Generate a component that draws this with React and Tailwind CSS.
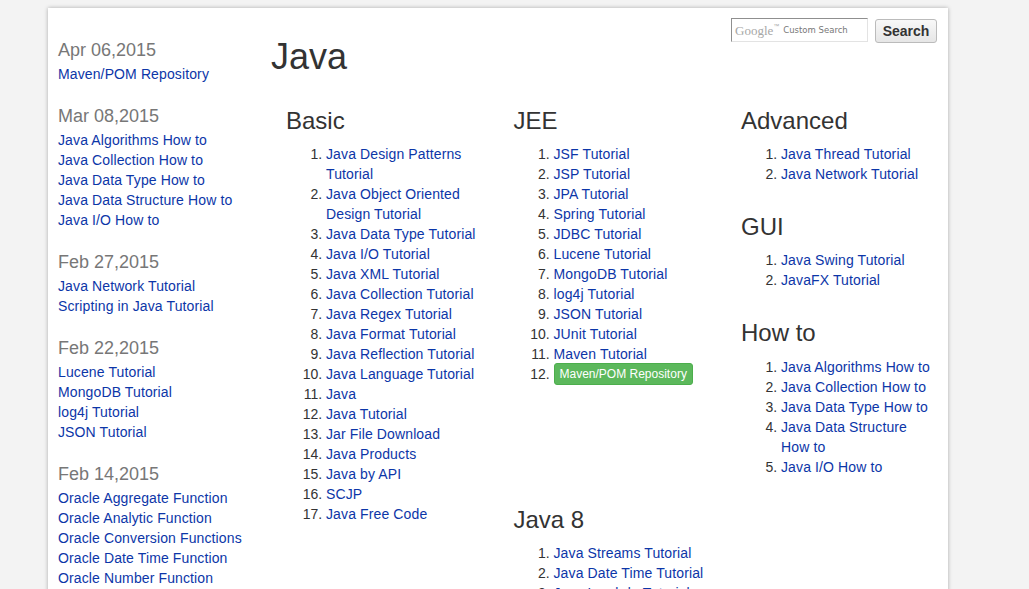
import React from "react";

const recent = [
  { date: "Apr 06,2015", links: ["Maven/POM Repository"] },
  {
    date: "Mar 08,2015",
    links: [
      "Java Algorithms How to",
      "Java Collection How to",
      "Java Data Type How to",
      "Java Data Structure How to",
      "Java I/O How to",
    ],
  },
  { date: "Feb 27,2015", links: ["Java Network Tutorial", "Scripting in Java Tutorial"] },
  { date: "Feb 22,2015", links: ["Lucene Tutorial", "MongoDB Tutorial", "log4j Tutorial", "JSON Tutorial"] },
  {
    date: "Feb 14,2015",
    links: [
      "Oracle Aggregate Function",
      "Oracle Analytic Function",
      "Oracle Conversion Functions",
      "Oracle Date Time Function",
      "Oracle Number Function",
      "Oracle String Function",
    ],
  },
];

const basic = [
  "Java Design Patterns Tutorial",
  "Java Object Oriented Design Tutorial",
  "Java Data Type Tutorial",
  "Java I/O Tutorial",
  "Java XML Tutorial",
  "Java Collection Tutorial",
  "Java Regex Tutorial",
  "Java Format Tutorial",
  "Java Reflection Tutorial",
  "Java Language Tutorial",
  "Java",
  "Java Tutorial",
  "Jar File Download",
  "Java Products",
  "Java by API",
  "SCJP",
  "Java Free Code",
];

const jee = [
  "JSF Tutorial",
  "JSP Tutorial",
  "JPA Tutorial",
  "Spring Tutorial",
  "JDBC Tutorial",
  "Lucene Tutorial",
  "MongoDB Tutorial",
  "log4j Tutorial",
  "JSON Tutorial",
  "JUnit Tutorial",
  "Maven Tutorial",
];

const java8 = ["Java Streams Tutorial", "Java Date Time Tutorial", "Java Lambda Tutorial"];
const advanced = ["Java Thread Tutorial", "Java Network Tutorial"];
const gui = ["Java Swing Tutorial", "JavaFX Tutorial"];
const howto = [
  "Java Algorithms How to",
  "Java Collection How to",
  "Java Data Type How to",
  "Java Data Structure How to",
  "Java I/O How to",
];

function Heading({ children, className = "" }) {
  return (
    <h3 className={"text-[24px] leading-[26.4px] text-[#333] mb-[10px] " + className}>{children}</h3>
  );
}

function List({ items, children }) {
  return (
    <ol className="list-decimal pl-10 text-[14px] leading-5 text-[#333]">
      {items.map((t) => (
        <li key={t}>
          <a href="#" className="text-[#0c36a8] tracking-[0.12px]">
            {t}
          </a>
        </li>
      ))}
      {children}
    </ol>
  );
}

export default function App() {
  return (
    <div className="min-h-screen bg-[#f3f3f3] pt-2 font-['Liberation_Sans',Arial,sans-serif] text-[14px] text-[#333]">
      <div className="ml-[48px] w-[900px] min-h-[700px] bg-white shadow-[0_0_4px_rgba(0,0,0,0.3)] flex">
        {/* sidebar */}
        <aside className="w-[223px] pl-[10px] pt-[32px] shrink-0">
          {recent.map((g, i) => (
            <div key={g.date} className={i ? "mt-[22px]" : ""}>
              <h4 className="text-[18px] leading-5 text-[#777] mb-[4px]">{g.date}</h4>
              {g.links.map((l) => (
                <div key={l} className="leading-5">
                  <a href="#" className="text-[#0c36a8] tracking-[0.12px]">
                    {l}
                  </a>
                </div>
              ))}
            </div>
          ))}
        </aside>

        {/* main */}
        <main className="flex-1 min-w-0 pr-[11px]">
          <div className="flex items-start justify-between">
            <h1 className="mt-[29px] text-[36px] leading-[39.6px] text-[#333]">Java</h1>
            <div className="mt-[10px] flex items-start gap-[7px]">
              <div className="w-[137px] h-[24px] border border-t-[#8f8f8f] border-l-[#8f8f8f] border-r-[#e3e3e3] border-b-[#e3e3e3] flex items-center pl-[3px] overflow-hidden">
                <span className="font-['Liberation_Serif',serif] text-[13px] text-[#a7a7a7] leading-none">
                  Google
                </span>
                <span className="text-[6px] text-[#a7a7a7] -mt-[7px]">™</span>
                <span className="ml-[4px] font-['DejaVu_Sans',sans-serif] text-[8.5px] text-[#777]">
                  Custom Search
                </span>
              </div>
              <button className="mt-px h-[24px] w-[62px] rounded-[3px] border border-[#bbb] bg-gradient-to-b from-[#f8f8f8] to-[#e6e6e6] text-[14px] font-bold text-[#333] leading-none">
                Search
              </button>
            </div>
          </div>

          <div className="mt-[31px] flex">
            <section className="w-[227.5px] shrink-0 pl-[15px] pr-[20px]">
              <Heading>Basic</Heading>
              <List items={basic} />
            </section>

            <section className="w-[227.5px] shrink-0 pl-[15px] pr-[20px]">
              <Heading>JEE</Heading>
              <List items={jee}>
                <li>
                  <a
                    href="#"
                    className="inline-block align-top -my-px px-[5px] py-px leading-[18px] text-[12px] text-white bg-[#5cb85c] border border-[#4cae4c] rounded-[3px]"
                  >
                    Maven/POM Repository
                  </a>
                </li>
              </List>
              <Heading className="mt-[123px]">Java 8</Heading>
              <List items={java8} />
            </section>

            <section className="w-[227.5px] shrink-0 pl-[15px] pr-[20px]">
              <Heading>Advanced</Heading>
              <List items={advanced} />
              <Heading className="mt-[30px]">GUI</Heading>
              <List items={gui} />
              <Heading className="mt-[30px]">How to</Heading>
              <List items={howto} />
            </section>
          </div>
        </main>
      </div>
    </div>
  );
}
